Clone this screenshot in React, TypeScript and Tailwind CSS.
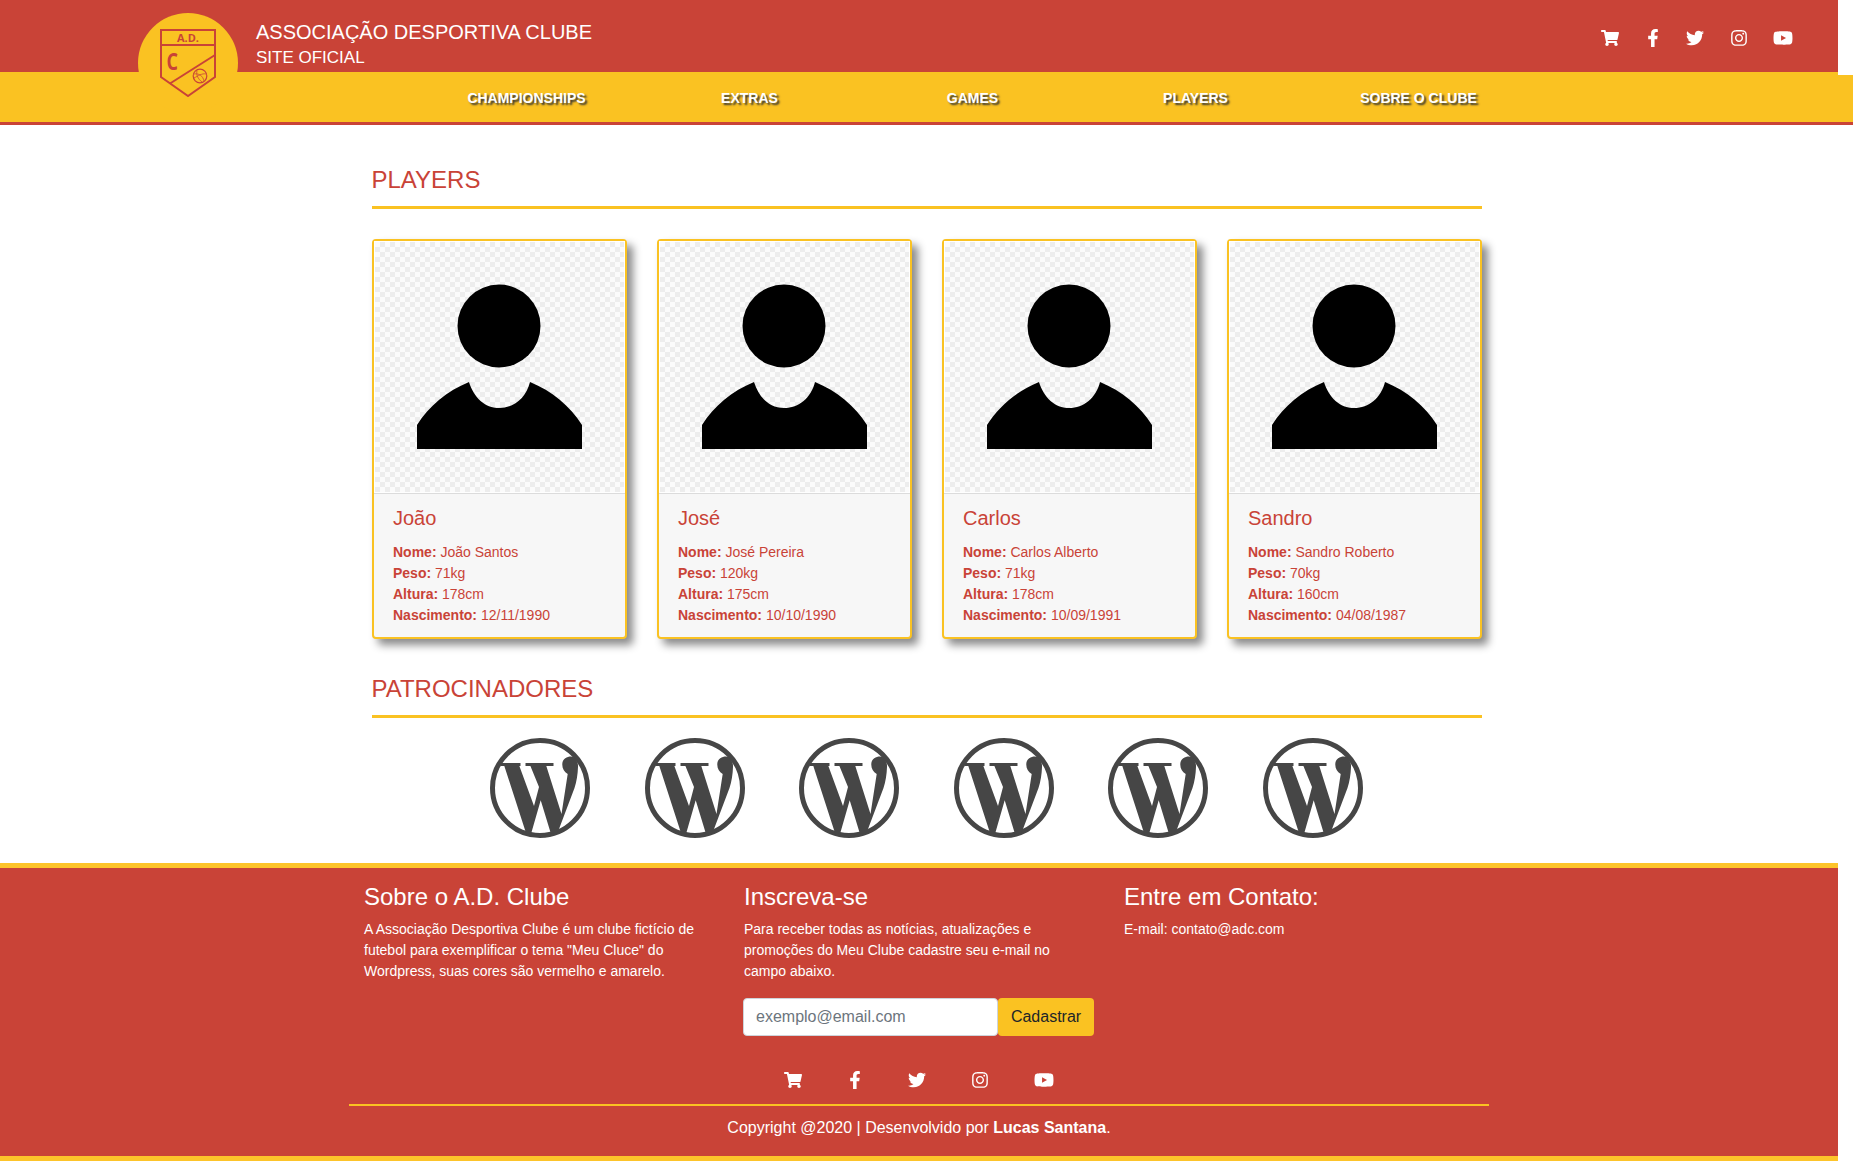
import { FaShoppingCart, FaFacebookF, FaTwitter, FaInstagram, FaYoutube } from "react-icons/fa"

const players = [
  { name: "João", full: "João Santos", peso: "71kg", altura: "178cm", nasc: "12/11/1990" },
  { name: "José", full: "José Pereira", peso: "120kg", altura: "175cm", nasc: "10/10/1990" },
  { name: "Carlos", full: "Carlos Alberto", peso: "71kg", altura: "178cm", nasc: "10/09/1991" },
  { name: "Sandro", full: "Sandro Roberto", peso: "70kg", altura: "160cm", nasc: "04/08/1987" },
]

const menu = ["Championships", "Extras", "Games", "Players", "Sobre o Clube"]

function Logo() {
  return (
    <svg viewBox="0 0 56 68" className="w-[56px] h-[68px]" fill="none" stroke="#c94337" strokeWidth="2">
      <path d="M1 1 H55 V48 L28 67 L1 48 Z" />
      <path d="M1 16 H55" />
      <path d="M55 26 L10 54.5" />
      <circle cx="40" cy="47" r="6.8" strokeWidth="1.2" />
      <path d="M34 45 C39 44 43 47 44 52 M37 41.5 C36 46 38 50 42 53 M34 49 C38 47 42 44 46 45" strokeWidth="0.8" />
      <text x="17" y="12.7" fontSize="11" fontWeight="700" fill="#c94337" stroke="none" fontFamily="Open Sans, sans-serif" textLength="22" lengthAdjust="spacingAndGlyphs">A.D.</text>
      <text x="6.5" y="41" fontSize="23" fontWeight="700" fill="#c94337" stroke="none" fontFamily="Open Sans, sans-serif" textLength="11.5" lengthAdjust="spacingAndGlyphs">C</text>
    </svg>
  )
}

function Avatar() {
  return (
    <svg viewBox="0 1 249 250" className="block w-[249px] h-[250px]" fill="#000">
      <circle cx="124" cy="85" r="41.5" />
      <path d="M42 208 V184 C54 165 72 150 94 141 C99 157 110 167 124 167 C139 167 151 157 155 141 C177 150 195 165 207 184 V208 Z" />
    </svg>
  )
}

function WordpressLogo() {
  return (
    <svg viewBox="0 0 100 100" className="w-[100px] h-[100px]" fill="#464646">
      <circle cx="50" cy="50" r="47.5" fill="none" stroke="#464646" strokeWidth="5" />
      <rect x="11" y="25" width="19.5" height="3" />
      <rect x="35.5" y="25" width="28" height="3" />
      <path d="M14 27 H29 L44 68 L49 49 L40 27 H56 L71.5 76 L77.7 36 C74 34 72 30 72.3 25.7 C72.6 21 77 18.5 81 18.5 C85 18.5 88.5 24 88 29 C87.8 36 86.5 44 84.5 50 L67.5 95 L61 96 L50.7 62.3 L41 96 L36 95 Z" />
    </svg>
  )
}

function Icons({ gap }: { gap: string }) {
  return (
    <div className={`flex items-center text-white ${gap}`}>
      <FaShoppingCart className="w-[18px] h-[16px]" />
      <FaFacebookF className="w-[14px] h-[18px]" />
      <FaTwitter className="w-[18px] h-[18px]" />
      <FaInstagram className="w-[16px] h-[18px]" />
      <FaYoutube className="w-[20px] h-[18px]" />
    </div>
  )
}

export default function App() {
  return (
    <div className="w-[1853px] h-[1161px] overflow-hidden bg-white font-['Liberation_Sans',Arial,sans-serif] text-[16px] leading-[1.5]">
      {/* Header */}
      <header className="relative">
        <div className="w-[1838px] h-[72px] bg-[#c94337] flex items-start justify-between pl-[256px] pr-[45px]">
          <div className="text-white pt-[17px]">
            <div className="text-[20px] leading-[30px] h-[29px]">ASSOCIAÇÃO DESPORTIVA CLUBE</div>
            <div className="text-[17px] leading-[24px]">SITE OFICIAL</div>
          </div>
          <div className="pt-[29px]">
            <Icons gap="gap-[26.5px]" />
          </div>
        </div>
        <nav className="h-[53px] bg-[#fac222] border-b-[3px] border-[#c94337] pl-[415px] pt-[2px] flex items-center">
          {menu.map((item) => (
            <a
              key={item}
              className="w-[223px] text-center text-[14px] font-bold uppercase text-white [text-shadow:2px_2px_2px_#333]"
            >
              {item}
            </a>
          ))}
        </nav>
        <div className="absolute left-[138px] top-[13px] w-[100px] h-[100px] rounded-full bg-[#fac222] flex justify-center pt-[16px]">
          <Logo />
        </div>
        <div className="absolute right-0 top-[72px] w-[15px] h-[3px] bg-white" />
      </header>

      {/* Players */}
      <main className="w-[1110px] mx-auto">
        <h2 className="text-[24px] leading-[29px] text-[#c94337] mt-[40px] pb-[12px]">PLAYERS</h2>
        <div className="h-[3px] bg-[#fac222]" />
        <div className="flex gap-[30px] mt-[30px]">
          {players.map((p) => (
            <div
              key={p.name}
              className="w-[255px] h-[400px] border-2 border-[#fac222] rounded-[4px] bg-[#f7f7f7] text-[#c94337] shadow-[6px_6px_8px_#8a8a8a]"
            >
              <div className="bg-white pl-px pt-px h-[253px] border-b border-[#dcdcdc]">
                <div className="w-[249px] h-[250px] bg-[repeating-conic-gradient(#ededed_0_25%,#fbfbfb_0_50%)] bg-[length:10px_10px]">
                  <Avatar />
                </div>
              </div>
              <div className="px-[19.5px] pt-[12px]">
                <h3 className="text-[20px] leading-[24px] mb-[12px]">{p.name}</h3>
                <div className="text-[14px] leading-[21px]">
                  <div><b>Nome:</b> {p.full}</div>
                  <div><b>Peso:</b> {p.peso}</div>
                  <div><b>Altura:</b> {p.altura}</div>
                  <div><b>Nascimento:</b> {p.nasc}</div>
                </div>
              </div>
            </div>
          ))}
        </div>

        {/* Sponsors */}
        <h2 className="text-[24px] leading-[29px] text-[#c94337] mt-[35px] pb-[12px]">PATROCINADORES</h2>
        <div className="h-[3px] bg-[#fac222]" />
        <div className="flex justify-center mt-[20px] h-[125px]">
          {[0, 1, 2, 3, 4, 5].map((i) => (
            <div key={i} className="w-[154.5px] flex justify-center">
              <WordpressLogo />
            </div>
          ))}
        </div>
      </main>

      {/* Footer */}
      <footer className="w-[1838px] h-[298px] bg-[#c94337] border-y-[5px] border-[#fdc42a] text-white">
        <div className="w-[1140px] mx-auto">
          <div className="flex h-[192px]">
            <div className="w-[380px] shrink-0 px-[15px]">
              <h4 className="text-[24px] leading-[29px] mt-[14px] mb-[8px]">Sobre o A.D. Clube</h4>
              <p className="text-[14px] leading-[21px] w-[335px]">
                A Associação Desportiva Clube é um clube fictício de futebol para exemplificar o tema "Meu Cluce" do Wordpress, suas cores são vermelho e amarelo.
              </p>
            </div>
            <div className="w-[380px] shrink-0 px-[15px]">
              <h4 className="text-[24px] leading-[29px] mt-[14px] mb-[8px]">Inscreva-se</h4>
              <p className="text-[14px] leading-[21px] w-[320px]">
                Para receber todas as notícias, atualizações e promoções do Meu Clube cadastre seu e-mail no campo abaixo.
              </p>
              <div className="flex mt-[16px] -ml-px">
                <input
                  placeholder="exemplo@email.com"
                  className="w-[255px] shrink-0 h-[38px] rounded-[4px] border border-[#ced4da] bg-white px-[12px] text-[16px] text-[#495057] placeholder:text-[#6c757d] outline-none"
                />
                <button className="w-[96px] shrink-0 h-[38px] rounded-[4px] bg-[#fac222] text-[16px] text-[#212529]">Cadastrar</button>
              </div>
            </div>
            <div className="w-[380px] shrink-0 px-[15px]">
              <h4 className="text-[24px] leading-[29px] mt-[14px] mb-[8px]">Entre em Contato:</h4>
              <p className="text-[14px] leading-[21px]">E-mail: contato@adc.com</p>
            </div>
          </div>
          <div className="h-[46px] flex justify-center items-center border-b-2 border-[#fac222] pb-[4px]">
            <Icons gap="gap-[46px]" />
          </div>
          <p className="text-center text-[16px] leading-[24px] mt-[10px]">
            Copyright @2020 | Desenvolvido por <b>Lucas Santana</b>.
          </p>
        </div>
      </footer>
    </div>
  )
}
